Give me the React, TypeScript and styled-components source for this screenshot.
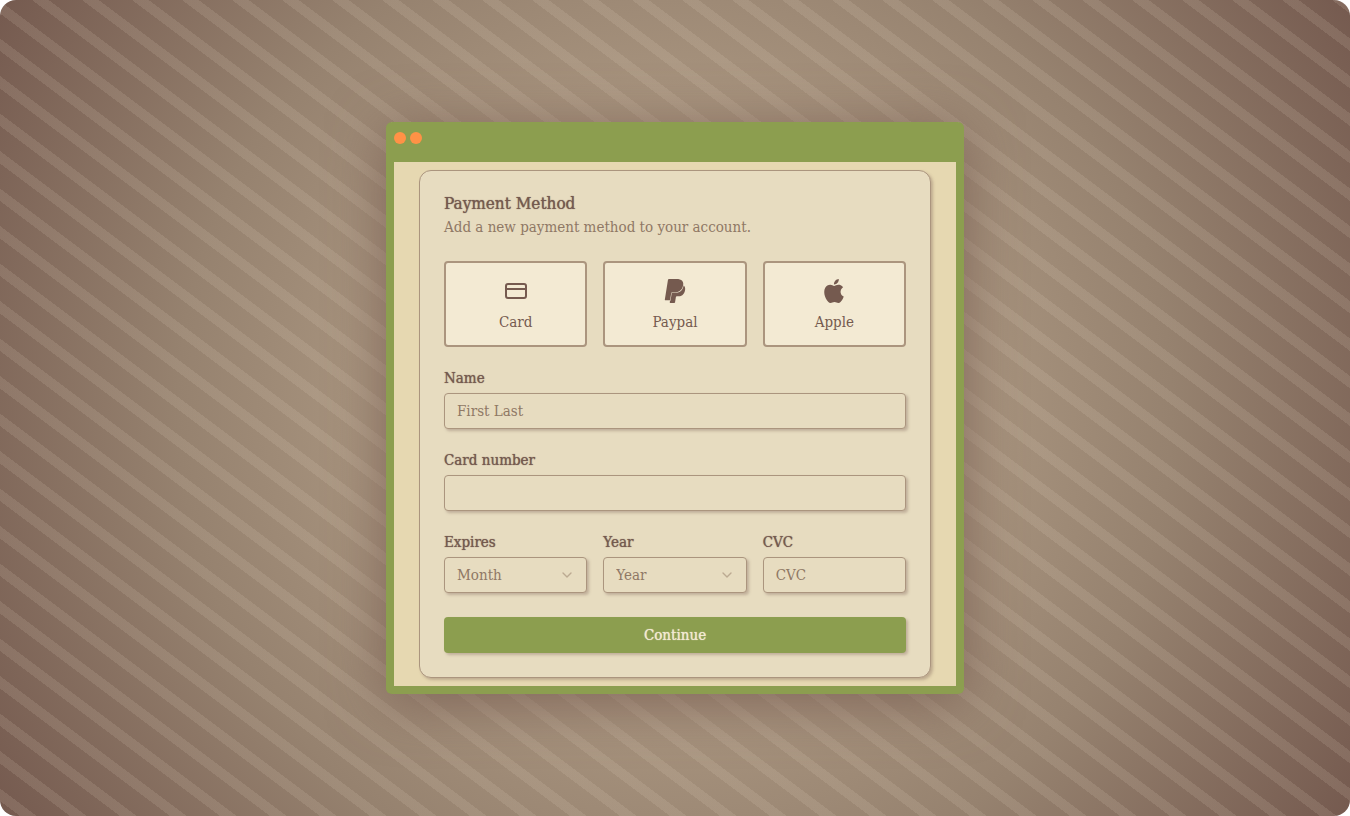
import React from "react";
import styled, { createGlobalStyle, css } from "styled-components";
import { ChevronDown, CreditCard } from "lucide-react";

const colors = {
  ink: "#755a4f",
  muted: "#8f7865",
  line: "#ab957e",
  moss: "#8c9e4f",
  orange: "#ff9246",
  sand: "#e6d8b1",
  card: "#e7dcc0",
  cream: "#f3ead3",
};

const GlobalStyle = createGlobalStyle`
  *, *::before, *::after { box-sizing: border-box; }
  body {
    margin: 0;
    background: #ffffff;
    color: ${colors.ink};
    font-family: "DejaVu Serif Condensed", "DejaVu Serif", serif;
    font-size: 15px;
  }
  button, input, select { font: inherit; color: inherit; }
`;

const Backdrop = styled.main`
  min-height: 100vh;
  padding: 24px;
  display: flex;
  align-items: center;
  justify-content: center;
  border-radius: 16px;
  background:
    repeating-linear-gradient(
      36.87deg,
      transparent 0 12px,
      rgba(240, 225, 205, 0.12) 12px 22px,
      transparent 22px 30px
    ),
    radial-gradient(circle, #c0ad94 0%, #a5917c 42%, #96826f 63%, #755a4f 100%);
`;

const Window = styled.section`
  width: 100%;
  max-width: 578px;
  overflow: hidden;
  border: 8px solid ${colors.moss};
  border-top-width: 0;
  border-radius: 6px;
  background: ${colors.sand};
  box-shadow: 0 8px 56px rgba(117, 90, 79, 0.8);
`;

const TitleBar = styled.header`
  height: 40px;
  padding-top: 10px;
  display: flex;
  gap: 4px;
  background: ${colors.moss};
`;

const Dot = styled.span`
  width: 12px;
  height: 12px;
  border-radius: 50%;
  background: ${colors.orange};
`;

const WindowBody = styled.div`
  padding: 8px;
`;

const raised = css`
  box-shadow: 2px 2px 3px rgba(117, 90, 79, 0.35);
`;

const medium = css`
  text-shadow: 0 0 1px currentColor;
`;

const Card = styled.form`
  max-width: 512px;
  margin: 0 auto;
  padding: 24px;
  display: grid;
  gap: 24px;
  border: 1px solid ${colors.line};
  border-radius: 12px;
  background: ${colors.card};
  ${raised}
`;

const CardHeader = styled.div`
  display: grid;
  gap: 6px;
`;

const Title = styled.h1`
  margin: 0;
  font-size: 17px;
  font-weight: 400;
  line-height: 16px;
  ${medium}
`;

const Description = styled.p`
  margin: 0;
  color: ${colors.muted};
  line-height: 20px;
`;

const Columns = styled.div`
  display: grid;
  grid-template-columns: repeat(3, minmax(0, 1fr));
  gap: 16px;
`;

const Method = styled.button`
  padding: 16px;
  display: flex;
  flex-direction: column;
  align-items: center;
  gap: 12px;
  border: 2px solid ${colors.line};
  border-radius: 4px;
  background: ${colors.cream};
  line-height: 14px;
  cursor: pointer;
`;

const Field = styled.div`
  display: grid;
  gap: 8px;
`;

const Label = styled.label`
  line-height: 14px;
  ${medium}
`;

const control = css`
  width: 100%;
  height: 36px;
  padding: 0 12px;
  border: 1px solid ${colors.line};
  border-radius: 4px;
  background: ${colors.card};
  ${raised}
`;

const Input = styled.input`
  ${control}
  &::placeholder { color: ${colors.muted}; opacity: 1; }
`;

const SelectWrap = styled.div`
  position: relative;
`;

const Select = styled.select`
  ${control}
  display: block;
  appearance: none;
  color: ${colors.muted};
`;

const Chevron = styled(ChevronDown)`
  position: absolute;
  top: 10px;
  right: 12px;
  color: ${colors.line};
  opacity: 0.7;
  pointer-events: none;
`;

const Continue = styled.button`
  height: 36px;
  border: 0;
  border-radius: 4px;
  background: ${colors.moss};
  color: ${colors.cream};
  cursor: pointer;
  ${raised}
  ${medium}
`;

const Paypal = () => (
  <svg width="24" height="24" viewBox="0 0 24 24" fill="currentColor" aria-hidden="true">
    <path d="M7.076 21.337H2.47a.641.641 0 0 1-.633-.74L4.944.901C5.026.382 5.474 0 5.998 0h7.46c2.57 0 4.578.543 5.69 1.81 1.01 1.15 1.304 2.42 1.012 4.287-.023.143-.047.288-.077.437-.983 5.05-4.349 6.797-8.647 6.797h-2.19c-.524 0-.968.382-1.05.9l-1.12 7.106zm14.146-14.42a3.35 3.35 0 0 0-.607-.541c-.013.076-.026.175-.041.254-.93 4.778-4.005 7.201-9.138 7.201h-2.19a.563.563 0 0 0-.556.479l-1.187 7.527h-.506l-.24 1.516a.56.56 0 0 0 .554.647h3.882c.46 0 .85-.334.922-.788.06-.26.76-4.852.816-5.09a.932.932 0 0 1 .923-.788h.58c3.76 0 6.705-1.528 7.565-5.946.36-1.847.174-3.388-.777-4.471z" />
  </svg>
);

const Apple = () => (
  <svg width="24" height="24" viewBox="0 0 24 24" fill="currentColor" aria-hidden="true">
    <path d="M12.152 6.896c-.948 0-2.415-1.078-3.96-1.04-2.04.027-3.91 1.183-4.961 3.014-2.117 3.675-.546 9.103 1.519 12.09 1.013 1.454 2.208 3.09 3.792 3.039 1.52-.065 2.09-.987 3.935-.987 1.831 0 2.35.987 3.96.948 1.637-.026 2.676-1.48 3.676-2.948 1.156-1.688 1.636-3.325 1.662-3.415-.039-.013-3.182-1.221-3.22-4.857-.026-3.04 2.48-4.494 2.597-4.559-1.429-2.09-3.623-2.324-4.39-2.376-2-.156-3.675 1.09-4.61 1.09zM15.53 3.83c.843-1.012 1.4-2.427 1.245-3.83-1.207.052-2.662.805-3.532 1.818-.78.896-1.454 2.338-1.273 3.714 1.338.104 2.715-.688 3.559-1.701" />
  </svg>
);

interface SelectFieldProps {
  id: string;
  label: string;
  placeholder: string;
  options: string[];
}

const SelectField = ({ id, label, placeholder, options }: SelectFieldProps) => (
  <Field>
    <Label htmlFor={id}>{label}</Label>
    <SelectWrap>
      <Select id={id} defaultValue="">
        <option value="" disabled>{placeholder}</option>
        {options.map((option) => (
          <option key={option}>{option}</option>
        ))}
      </Select>
      <Chevron size={16} aria-hidden="true" />
    </SelectWrap>
  </Field>
);

const months = Array.from({ length: 12 }, (_, i) => String(i + 1));
const years = Array.from({ length: 10 }, (_, i) => String(2024 + i));

export default function App() {
  return (
    <>
      <GlobalStyle />
      <Backdrop>
        <Window>
          <TitleBar>
            <Dot />
            <Dot />
          </TitleBar>
          <WindowBody>
            <Card onSubmit={(event) => event.preventDefault()}>
              <CardHeader>
                <Title>Payment Method</Title>
                <Description>Add a new payment method to your account.</Description>
              </CardHeader>
              <Columns>
                <Method type="button"><CreditCard size={24} aria-hidden="true" />Card</Method>
                <Method type="button"><Paypal />Paypal</Method>
                <Method type="button"><Apple />Apple</Method>
              </Columns>
              <Field>
                <Label htmlFor="name">Name</Label>
                <Input id="name" placeholder="First Last" />
              </Field>
              <Field>
                <Label htmlFor="number">Card number</Label>
                <Input id="number" />
              </Field>
              <Columns>
                <SelectField id="month" label="Expires" placeholder="Month" options={months} />
                <SelectField id="year" label="Year" placeholder="Year" options={years} />
                <Field>
                  <Label htmlFor="cvc">CVC</Label>
                  <Input id="cvc" placeholder="CVC" />
                </Field>
              </Columns>
              <Continue type="submit">Continue</Continue>
            </Card>
          </WindowBody>
        </Window>
      </Backdrop>
    </>
  );
}
